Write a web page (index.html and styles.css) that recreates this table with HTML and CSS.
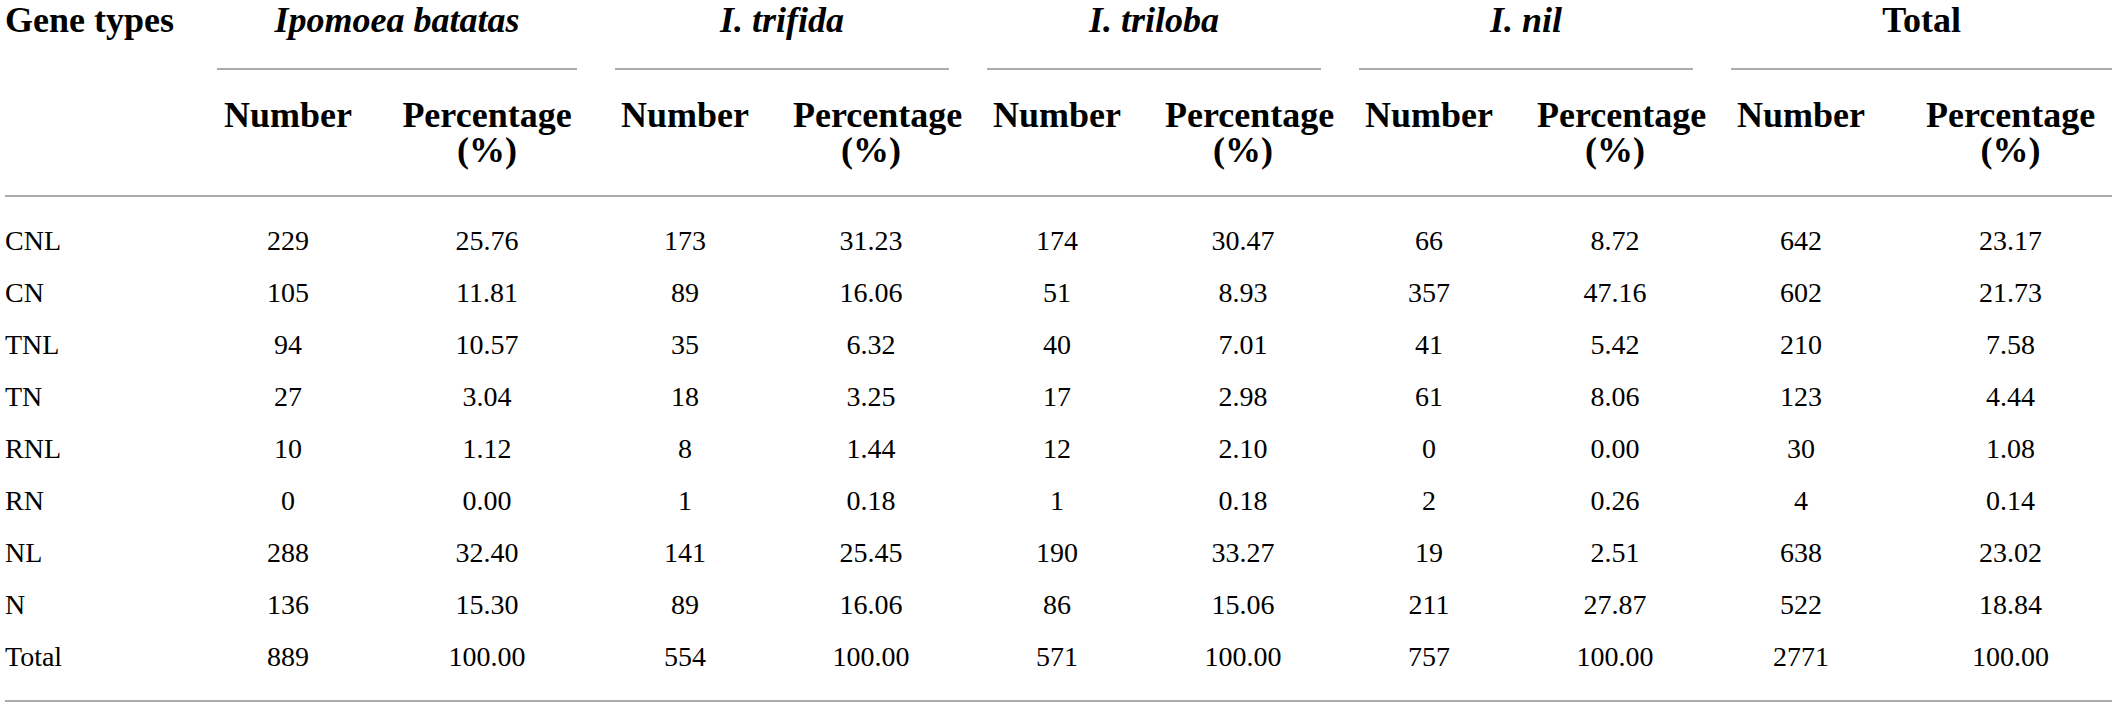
FILE: index.html
```html
<!DOCTYPE html>
<html lang="en">
<head>
    <meta charset="UTF-8">
    <meta name="viewport" content="width=device-width, initial-scale=1.0">
    <title>NBS-encoding gene types</title>
    <link rel="stylesheet" href="styles.css">
</head>
<body>
    <table class="gene-table">
        <colgroup>
            <col class="col-type">
            <col class="col-num-first">
            <col class="col-pct-first">
            <col class="col-num">
            <col class="col-pct">
            <col class="col-num">
            <col class="col-pct">
            <col class="col-num">
            <col class="col-pct">
            <col class="col-num">
            <col class="col-pct-last">
        </colgroup>
        <thead>
            <tr class="head-top">
                <th rowspan="2" class="type">Gene types</th>
                <th colspan="2"><span class="group-name"><i>Ipomoea batatas</i></span></th>
                <th colspan="2"><span class="group-name"><i>I. trifida</i></span></th>
                <th colspan="2"><span class="group-name"><i>I. triloba</i></span></th>
                <th colspan="2"><span class="group-name"><i>I. nil</i></span></th>
                <th colspan="2" class="last"><span class="group-name">Total</span></th>
            </tr>
            <tr class="head-sub">
                <th>Number</th>
                <th>Percentage<br>(%)</th>
                <th>Number</th>
                <th>Percentage<br>(%)</th>
                <th>Number</th>
                <th>Percentage<br>(%)</th>
                <th>Number</th>
                <th>Percentage<br>(%)</th>
                <th>Number</th>
                <th class="last">Percentage<br>(%)</th>
            </tr>
        </thead>
        <tbody>
            <tr>
                <td class="type">CNL</td>
                <td>229</td><td>25.76</td>
                <td>173</td><td>31.23</td>
                <td>174</td><td>30.47</td>
                <td>66</td><td>8.72</td>
                <td>642</td><td class="last">23.17</td>
            </tr>
            <tr>
                <td class="type">CN</td>
                <td>105</td><td>11.81</td>
                <td>89</td><td>16.06</td>
                <td>51</td><td>8.93</td>
                <td>357</td><td>47.16</td>
                <td>602</td><td class="last">21.73</td>
            </tr>
            <tr>
                <td class="type">TNL</td>
                <td>94</td><td>10.57</td>
                <td>35</td><td>6.32</td>
                <td>40</td><td>7.01</td>
                <td>41</td><td>5.42</td>
                <td>210</td><td class="last">7.58</td>
            </tr>
            <tr>
                <td class="type">TN</td>
                <td>27</td><td>3.04</td>
                <td>18</td><td>3.25</td>
                <td>17</td><td>2.98</td>
                <td>61</td><td>8.06</td>
                <td>123</td><td class="last">4.44</td>
            </tr>
            <tr>
                <td class="type">RNL</td>
                <td>10</td><td>1.12</td>
                <td>8</td><td>1.44</td>
                <td>12</td><td>2.10</td>
                <td>0</td><td>0.00</td>
                <td>30</td><td class="last">1.08</td>
            </tr>
            <tr>
                <td class="type">RN</td>
                <td>0</td><td>0.00</td>
                <td>1</td><td>0.18</td>
                <td>1</td><td>0.18</td>
                <td>2</td><td>0.26</td>
                <td>4</td><td class="last">0.14</td>
            </tr>
            <tr>
                <td class="type">NL</td>
                <td>288</td><td>32.40</td>
                <td>141</td><td>25.45</td>
                <td>190</td><td>33.27</td>
                <td>19</td><td>2.51</td>
                <td>638</td><td class="last">23.02</td>
            </tr>
            <tr>
                <td class="type">N</td>
                <td>136</td><td>15.30</td>
                <td>89</td><td>16.06</td>
                <td>86</td><td>15.06</td>
                <td>211</td><td>27.87</td>
                <td>522</td><td class="last">18.84</td>
            </tr>
            <tr>
                <td class="type">Total</td>
                <td>889</td><td>100.00</td>
                <td>554</td><td>100.00</td>
                <td>571</td><td>100.00</td>
                <td>757</td><td>100.00</td>
                <td>2771</td><td class="last">100.00</td>
            </tr>
        </tbody>
    </table>
</body>
</html>
```

FILE: styles.css
```css
body {
    margin: 0;
    padding: 0;
    background-color: #fff;
    color: #000;
    font-family: "Liberation Serif", "Times New Roman", serif;
}
.gene-table {
    margin-left: 5px;
    width: 2107px;
    table-layout: fixed;
    border-collapse: collapse;
}
.col-type { width: 193px; }
.col-num-first { width: 180px; }
.col-pct-first { width: 218px; }
.col-num { width: 178px; }
.col-pct { width: 194px; }
.col-pct-last { width: 222px; }

.gene-table th,
.gene-table td {
    padding: 0 19px;
    text-align: center;
}
.gene-table th {
    font-size: 36px;
    font-weight: bold;
    vertical-align: top;
}
.gene-table .type {
    text-align: left;
    padding-left: 0;
}
.gene-table .last {
    padding-right: 0;
}
.head-top th {
    line-height: 40px;
}
.group-name {
    display: block;
    padding-bottom: 28px;
    border-bottom: 2px solid #ababab;
}
.head-sub th {
    line-height: 35px;
    padding-top: 28px;
    padding-bottom: 27px;
}
.gene-table thead,
.gene-table tbody {
    border-bottom: 2px solid #ababab;
}
.gene-table td {
    font-size: 28px;
    line-height: 52px;
}
.gene-table tbody tr:first-child td {
    padding-top: 18px;
}
.gene-table tbody tr:last-child td {
    padding-bottom: 17px;
}
```
